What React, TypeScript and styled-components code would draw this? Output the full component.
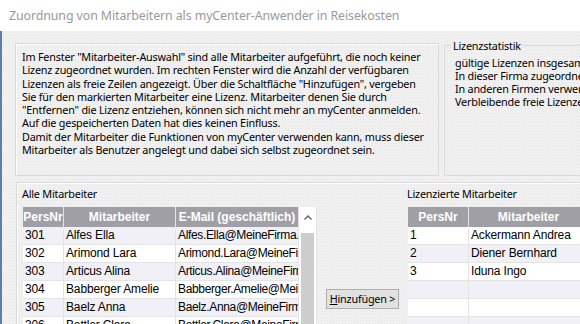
import React from 'react'
import styled, { createGlobalStyle } from 'styled-components'

const GlobalStyle = createGlobalStyle`
  html, body {
    margin: 0;
    padding: 0;
  }
  body {
    width: 580px;
    height: 324px;
    overflow: hidden;
    font-family: 'Noto Sans', 'Open Sans', sans-serif;
    color: #000;
  }
`

const Window = styled.div`
  width: 580px;
  height: 324px;
  display: flex;
  flex-direction: column;
  overflow: hidden;
  background: #fff;
`

const TitleBar = styled.div`
  height: 31px;
  flex: none;
  display: flex;
  align-items: center;
  padding-left: 9px;
  font-size: 12.4px;
  letter-spacing: -0.1px;
  color: #9a9a9a;
  white-space: nowrap;
`

const Body = styled.div`
  flex: 1;
  min-height: 0;
  border-left: 2px solid #5b7fa8;
  background-color: #f0f0f0;
  background-image: radial-gradient(circle, #e6e6e6 0.6px, transparent 0.8px);
  background-size: 3px 3px;
  padding: 8px 0 0 13px;
  display: flex;
  flex-direction: column;
  overflow: hidden;
`

const TopRow = styled.div`
  display: flex;
  align-items: flex-end;
  gap: 5px;
  height: 137px;
  flex: none;
`

const InfoBox = styled.div`
  width: 424px;
  height: 133px;
  box-sizing: border-box;
  border: 1px solid #d9d9d9;
  box-shadow: inset 1px 1px 0 #fff;
  padding: 6px 0 0 6px;
  font-size: 10.8px;
  letter-spacing: -0.2px;
  line-height: 13.3px;
  white-space: pre;
  overflow: hidden;
`

const StatBox = styled.fieldset`
  flex: 1;
  margin: 0;
  min-width: 0;
  height: 137px;
  box-sizing: border-box;
  border: 1px solid #d9d9d9;
  border-right: none;
  padding: 4px 0 0 10px;
  overflow: hidden;
`

const Legend = styled.legend`
  font-size: 10.8px;
  letter-spacing: -0.2px;
  line-height: 13px;
  padding: 0 2px;
  margin-left: -4px;
`

const StatLine = styled.div`
  font-size: 10.8px;
  letter-spacing: -0.2px;
  line-height: 13px;
  white-space: nowrap;
`

const LowerGroup = styled.div`
  flex: 1;
  margin: 6px -10px -10px 1px;
  border: 1px solid #d9d9d9;
  box-shadow: inset 1px 1px 0 #fff;
  padding: 4px 0 0 6px;
  display: flex;
  align-items: flex-start;
`

const Pane = styled.div<{ $width?: number }>`
  display: flex;
  flex-direction: column;
  width: ${({ $width }) => ($width ? `${$width}px` : 'auto')};
  flex: ${({ $width }) => ($width ? 'none' : '1')};
`

const PaneLabel = styled.div`
  font-size: 10.8px;
  letter-spacing: -0.2px;
  line-height: 13px;
  margin: 0 0 7px -1px;
  white-space: nowrap;
`

const TableWrap = styled.div`
  display: flex;
  border-right: 1px solid #e4e4e4;
`

const Table = styled.div<{ $width: string }>`
  width: ${({ $width }) => $width};
  display: flex;
  flex-direction: column;
  background: #fff;
`

const HeaderRow = styled.div<{ $cols: string }>`
  display: grid;
  grid-template-columns: ${({ $cols }) => $cols};
  height: 20px;
  background: #9f9fa5;
`

const HeaderCell = styled.div`
  font-family: 'Liberation Sans', Arial, sans-serif;
  font-weight: bold;
  font-size: 12px;
  line-height: 20px;
  color: #fff;
  text-align: center;
  border-right: 1px solid #e4e4e4;
  white-space: nowrap;
  overflow: hidden;
`

const Row = styled.div<{ $cols: string; $alt?: boolean }>`
  display: grid;
  grid-template-columns: ${({ $cols }) => $cols};
  height: 18px;
  box-sizing: border-box;
  border-bottom: 1px solid #e4e4e4;
  background: ${({ $alt }) => ($alt ? '#f0f0f6' : '#fff')};
`

const Cell = styled.div<{ $tight?: boolean }>`
  font-family: 'Liberation Sans', Arial, sans-serif;
  font-size: 12px;
  letter-spacing: ${({ $tight }) => ($tight ? '-0.35px' : '-0.15px')};
  line-height: 17px;
  padding-left: 2px;
  border-right: 1px solid #e4e4e4;
  white-space: nowrap;
  overflow: hidden;
`

const ScrollBar = styled.div`
  width: 18px;
  display: flex;
  flex-direction: column;
  background: #fff;
`

const ScrollArrow = styled.div`
  height: 26px;
  display: flex;
  justify-content: center;
  padding-top: 8px;
  box-sizing: border-box;
`

const ScrollThumb = styled.div`
  flex: 1;
  margin: 0 2px;
  background: #cdcdcd;
  height: 100px;
`

const ButtonPane = styled.div`
  width: 91px;
  flex: none;
  display: flex;
  justify-content: center;
  padding-top: 102px;
`

const Button = styled.button`
  width: 73px;
  height: 20px;
  padding: 0;
  background: #e1e1e1;
  border: 1px solid #adadad;
  font-family: 'Noto Sans', 'Open Sans', sans-serif;
  font-size: 10.8px;
  letter-spacing: -0.2px;
  line-height: 18px;
  color: #000;
  white-space: nowrap;
  overflow: hidden;
`

const allEmployees = [
  ['301', 'Alfes Ella', 'Alfes.Ella@MeineFirma.de'],
  ['302', 'Arimond Lara', 'Arimond.Lara@MeineFirma.de'],
  ['303', 'Articus Alina', 'Articus.Alina@MeineFirma.de'],
  ['304', 'Babberger Amelie', 'Babberger.Amelie@MeineFirma.de'],
  ['305', 'Baelz Anna', 'Baelz.Anna@MeineFirma.de'],
  ['306', 'Bettler Clara', 'Bettler.Clara@MeineFirma.de'],
]

const licensed = [
  ['1', 'Ackermann Andrea'],
  ['2', 'Diener Bernhard'],
  ['3', 'Iduna Ingo'],
  ['', ''],
  ['', ''],
  ['', ''],
]

const infoText = `Im Fenster "Mitarbeiter-Auswahl" sind alle Mitarbeiter aufgeführt, die noch keiner
Lizenz zugeordnet wurden. Im rechten Fenster wird die Anzahl der verfügbaren
Lizenzen als freie Zeilen angezeigt. Über die Schaltfläche "Hinzufügen", vergeben
Sie für den markierten Mitarbeiter eine Lizenz. Mitarbeiter denen Sie durch
"Entfernen" die Lizenz entziehen, können sich nicht mehr an myCenter anmelden.
Auf die gespeicherten Daten hat dies keinen Einfluss.
Damit der Mitarbeiter die Funktionen von myCenter verwenden kann, muss dieser
Mitarbeiter als Benutzer angelegt und dabei sich selbst zugeordnet sein.`

const leftCols = '41px 112px 123px'
const rightCols = '61px 1fr'

export default function App() {
  return (
    <Window>
      <GlobalStyle />
      <TitleBar>Zuordnung von Mitarbeitern als myCenter-Anwender in Reisekosten</TitleBar>
      <Body>
        <TopRow>
          <InfoBox>{infoText}</InfoBox>
          <StatBox>
            <Legend>Lizenzstatistik</Legend>
            <StatLine>gültige Lizenzen insgesamt</StatLine>
            <StatLine>In dieser Firma zugeordnet</StatLine>
            <StatLine>In anderen Firmen verwendet</StatLine>
            <StatLine>Verbleibende freie Lizenzen</StatLine>
          </StatBox>
        </TopRow>
        <LowerGroup>
          <Pane $width={294}>
            <PaneLabel>Alle Mitarbeiter</PaneLabel>
            <TableWrap>
              <Table $width="276px">
                <HeaderRow $cols={leftCols}>
                  <HeaderCell>PersNr</HeaderCell>
                  <HeaderCell>Mitarbeiter</HeaderCell>
                  <HeaderCell>E-Mail (geschäftlich)</HeaderCell>
                </HeaderRow>
                {allEmployees.map(([nr, name, mail], i) => (
                  <Row key={nr} $cols={leftCols} $alt={i % 2 === 0}>
                    <Cell>{nr}</Cell>
                    <Cell>{name}</Cell>
                    <Cell $tight>{mail}</Cell>
                  </Row>
                ))}
              </Table>
              <ScrollBar>
                <ScrollArrow>
                  <svg width="8" height="5" viewBox="0 0 8 5">
                    <polyline points="0.5,4.5 4,1 7.5,4.5" fill="none" stroke="#606060" strokeWidth="1.4" />
                  </svg>
                </ScrollArrow>
                <ScrollThumb />
              </ScrollBar>
            </TableWrap>
          </Pane>
          <ButtonPane>
            <Button>
              <u>H</u>inzufügen &gt;
            </Button>
          </ButtonPane>
          <Pane>
            <PaneLabel>Lizenzierte Mitarbeiter</PaneLabel>
            <Table $width="100%">
              <HeaderRow $cols={rightCols}>
                <HeaderCell>PersNr</HeaderCell>
                <HeaderCell>Mitarbeiter</HeaderCell>
              </HeaderRow>
              {licensed.map(([nr, name], i) => (
                <Row key={i} $cols={rightCols} $alt={i % 2 === 1}>
                  <Cell>{nr}</Cell>
                  <Cell>{name}</Cell>
                </Row>
              ))}
            </Table>
          </Pane>
        </LowerGroup>
      </Body>
    </Window>
  )
}
